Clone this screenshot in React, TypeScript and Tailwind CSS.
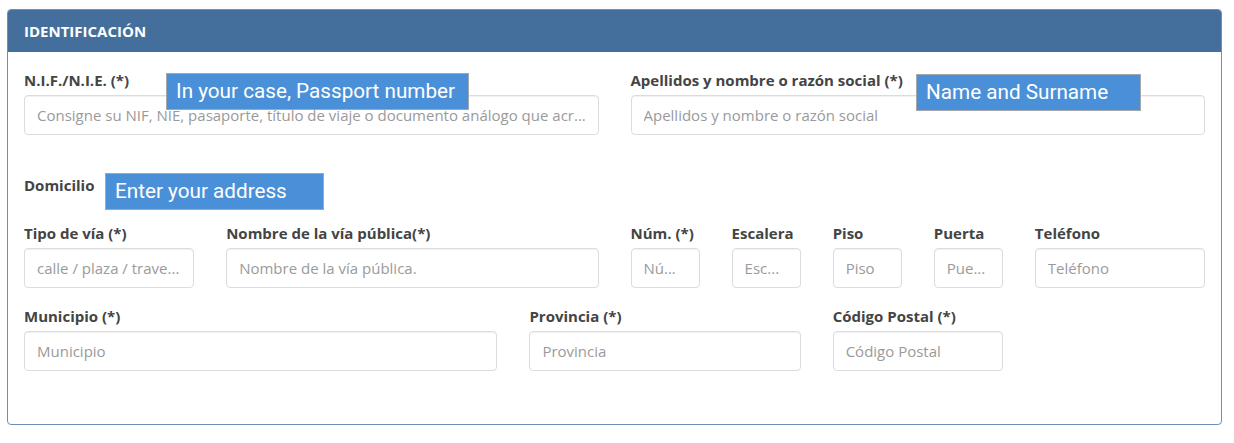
import type { ReactElement } from "react";

type FieldProps = {
  label: string;
  placeholder: string;
  span: string;
};

function Field({ label, placeholder, span }: FieldProps): ReactElement {
  return (
    <div className={`${span} flex flex-col`}>
      <label className="h-5 text-[15px] font-bold leading-5 whitespace-nowrap text-[#444]">{label}</label>
      <input
        type="text"
        placeholder={placeholder}
        className="mt-[5px] h-10 w-full rounded-[4px] border border-[#dcdcdc] bg-white px-3 text-[15px] text-[#555] shadow-[inset_0_1px_1px_rgba(0,0,0,0.06)] outline-none placeholder:text-[#9a9a9a]"
      />
    </div>
  );
}

function Note({ text, className }: { text: string; className: string }): ReactElement {
  return (
    <div
      className={`absolute flex h-[37px] items-center border border-[#a3a8ae] bg-[#4a90d9] pl-[9px] text-[20.7px] text-white font-['Roboto',sans-serif] ${className}`}
    >
      {text}
    </div>
  );
}

export default function App(): ReactElement {
  return (
    <div className="relative h-[443px] w-[1234px] bg-white font-['Open_Sans',sans-serif]">
      <div className="pt-[9px] pl-[7px]">
        <section className="h-[416px] w-[1215px] overflow-hidden rounded-[4px] border border-[#6f8fb3] bg-white">
          <header className="flex h-[42px] items-center bg-[#446f9c] px-4 text-[15px] font-bold text-white">
            IDENTIFICACIÓN
          </header>
          <div className="px-4 pt-[18px]">
            <div className="grid grid-cols-12 gap-x-8">
              <Field
                span="col-span-6"
                label="N.I.F./N.I.E. (*)"
                placeholder="Consigne su NIF, NIE, pasaporte, título de viaje o documento análogo que acr..."
              />
              <Field
                span="col-span-6"
                label="Apellidos y nombre o razón social (*)"
                placeholder="Apellidos y nombre o razón social"
              />
            </div>

            <div className="mt-10 h-5 text-[15px] font-bold leading-5 text-[#444]">Domicilio</div>

            <div className="mt-[28px] grid grid-cols-12 gap-x-8">
              <Field span="col-span-2" label="Tipo de vía (*)" placeholder="calle / plaza / trave..." />
              <Field span="col-span-4" label="Nombre de la vía pública(*)" placeholder="Nombre de la vía pública." />
              <Field span="col-span-1" label="Núm. (*)" placeholder="Nú..." />
              <Field span="col-span-1" label="Escalera" placeholder="Esc..." />
              <Field span="col-span-1" label="Piso" placeholder="Piso" />
              <Field span="col-span-1" label="Puerta" placeholder="Pue..." />
              <Field span="col-span-2" label="Teléfono" placeholder="Teléfono" />
            </div>

            <div className="mt-[18px] grid grid-cols-12 gap-x-8">
              <Field span="col-span-5" label="Municipio (*)" placeholder="Municipio" />
              <Field span="col-span-3" label="Provincia (*)" placeholder="Provincia" />
              <Field span="col-span-2" label="Código Postal (*)" placeholder="Código Postal" />
            </div>
          </div>
        </section>
      </div>

      <Note text="In your case, Passport number" className="left-[166px] top-[73px] w-[303px]" />
      <Note text="Name and Surname" className="left-[916px] top-[74px] w-[225px]" />
      <Note text="Enter your address" className="left-[105px] top-[173px] w-[219px]" />
    </div>
  );
}
